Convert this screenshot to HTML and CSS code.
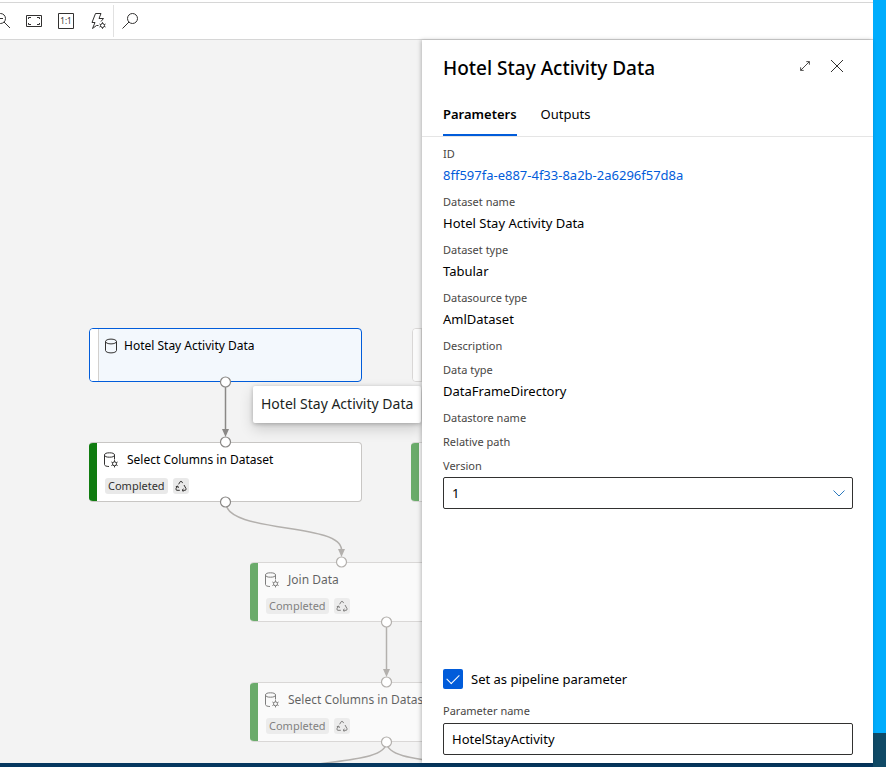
FILE: index.html
```html
<!DOCTYPE html>
<html lang="en">
<head>
<meta charset="utf-8">
<title>Pipeline run</title>
<link rel="stylesheet" href="styles.css">
</head>
<body>
<svg class="sprite" aria-hidden="true">
  <symbol id="dataset" viewBox="0 0 16 16"><ellipse cx="8" cy="3.500" rx="5.500" ry="2.400"/><path d="M2.500 3.500v9C2.500 13.800 5 14.900 8 14.900s5.500-1.100 5.500-2.400v-9"/></symbol>
  <symbol id="module" viewBox="0 0 16 16"><ellipse cx="6.500" cy="3" rx="5" ry="2.200"/><path d="M1.500 3v9.500c0 1.200 1.800 2 4.500 2M11.500 3v4.500"/><circle cx="11.500" cy="11.800" r="2"/><path d="M11.500 8.200v1.600M11.500 13.800v1.600M8.400 10l1.400.8M13.200 12.800l1.400.8M8.400 13.600l1.400-.8M13.200 10.800l1.400-.8"/></symbol>
  <symbol id="recycle" viewBox="0 0 12 12"><path d="M3.600 4.300 5.200 1.700q.8-1.200 1.600 0l.8 1.400M9 5l2 3.600q.5 1.500-1 1.700H7.200M8.500 8.900 7 10.300l1.500 1.400M4.800 10.300H2q-1.500-.2-1-1.700l1.400-2.500M.8 6.700l2-.7.6 2"/></symbol>
</svg>
<div class="desktop">
  <div class="window">
    <header class="toolbar">
      <button class="tool" aria-label="Zoom out"><svg viewBox="0 0 20 20"><circle cx="8.500" cy="7.500" r="5"/><path d="M12 11l6 6M6 7.500h5"/></svg></button>
      <button class="tool" aria-label="Fit to screen"><svg viewBox="0 0 20 20"><path d="M2.500 4.500h15v11h-15z"/><path d="M4.500 8V6.500H7M13 6.500h2.500V8M4.500 12v1.500H7M13 13.500h2.500V12"/></svg></button>
      <button class="tool" aria-label="Actual size"><svg viewBox="0 0 20 20"><path d="M2.500 2.500h15v15h-15z"/><text x="10" y="13">1:1</text></svg></button>
      <button class="tool" aria-label="Auto layout"><svg viewBox="0 0 20 20"><path d="M10.500 14.500H8.500l-4 3 2.500-6H4L7.500 2.500H13L11 7.500h4.500L13 10.500"/><circle cx="14.500" cy="14.500" r="2"/><path d="M14.500 11.200v1.300M14.500 16.500v1.300M11.500 13l1.200.6M16.300 15.400l1.200.6M11.500 16l1.200-.6M16.300 13.600l1.200-.6"/></svg></button>
      <button class="tool search" aria-label="Search"><svg viewBox="0 0 20 20"><circle cx="12.500" cy="7.500" r="5"/><path d="M9 11l-6.500 6.500"/></svg></button>
    </header>
    <main class="workspace">
      <section class="canvas" aria-label="Pipeline graph">
        <article class="node source selected n1"><div class="head"><svg class="icon"><use href="#dataset"/></svg><span>Hotel Stay Activity Data</span></div></article>
        <article class="node source faded n2"></article>
        <article class="node done n3"><div class="head"><svg class="icon"><use href="#module"/></svg><span>Select Columns in Dataset</span></div><div class="status"><span class="badge">Completed</span><span class="badge reuse"><svg><use href="#recycle"/></svg></span></div></article>
        <article class="node done faded n4"></article>
        <article class="node done faded n5"><div class="head"><svg class="icon"><use href="#module"/></svg><span>Join Data</span></div><div class="status"><span class="badge">Completed</span><span class="badge reuse"><svg><use href="#recycle"/></svg></span></div></article>
        <article class="node done faded n6"><div class="head"><svg class="icon"><use href="#module"/></svg><span>Select Columns in Dataset</span></div><div class="status"><span class="badge">Completed</span><span class="badge reuse"><svg><use href="#recycle"/></svg></span></div></article>
        <svg class="wires" aria-hidden="true">
          <g class="strong"><path d="M225.500 342v48"/><path class="tip" d="M222 389h7l-3.500 8z"/></g>
          <path d="M225.500 462C225.500 494 341.500 482 341.500 510"/><path class="tip" d="M338 509h7l-3.500 8z"/>
          <path d="M386.500 582v48"/><path class="tip" d="M383 629h7l-3.500 8z"/>
          <path d="M386.500 702C386.500 722 330 719 270 732M386.500 702C386.500 722 443 719 503 732"/>
          <g class="strong"><circle cx="225.500" cy="342" r="5"/><circle cx="225.500" cy="402" r="5"/><circle cx="225.500" cy="462" r="5"/></g>
          <circle cx="341.500" cy="522" r="5"/><circle cx="386.500" cy="582" r="5"/><circle cx="386.500" cy="642" r="5"/><circle cx="386.500" cy="702" r="5"/>
        </svg>
        <div class="tooltip" role="tooltip">Hotel Stay Activity Data</div>
      </section>
      <aside class="panel">
        <div class="panel-head">
          <h1>Hotel Stay Activity Data</h1>
          <button class="action" aria-label="Expand"><svg viewBox="0 0 16 16"><path d="M3 13 13 3M9.500 3H13v3.500M3 9.500V13h3.500"/></svg></button>
          <button class="action close" aria-label="Close"><svg viewBox="0 0 16 16"><path d="M2 2l12 12M14 2 2 14"/></svg></button>
        </div>
        <nav class="tabs"><a href="#parameters" class="active" aria-current="page">Parameters</a><a href="#outputs">Outputs</a></nav>
        <div class="content" id="parameters">
          <dl>
            <div><dt>ID</dt><dd><a href="#dataset-details">8ff597fa-e887-4f33-8a2b-2a6296f57d8a</a></dd></div>
            <div><dt>Dataset name</dt><dd>Hotel Stay Activity Data</dd></div>
            <div><dt>Dataset type</dt><dd>Tabular</dd></div>
            <div><dt>Datasource type</dt><dd>AmlDataset</dd></div>
            <div><dt>Description</dt></div>
            <div><dt>Data type</dt><dd>DataFrameDirectory</dd></div>
            <div><dt>Datastore name</dt></div>
            <div><dt>Relative path</dt></div>
          </dl>
          <label class="caption" for="version">Version</label>
          <div class="select"><select id="version" class="field"><option>1</option></select><svg viewBox="0 0 14 14"><path d="M1.500 4.500 7 10l5.500-5.500"/></svg></div>
          <div class="pipeline">
            <div class="check"><input type="checkbox" id="pipeline-param" checked><label for="pipeline-param">Set as pipeline parameter</label></div>
            <label class="caption" for="param-name">Parameter name</label>
            <input class="field" id="param-name" type="text" value="HotelStayActivity">
          </div>
        </div>
      </aside>
    </main>
  </div>
</div>
</body>
</html>
```
FILE: styles.css
```css
* { box-sizing: border-box; }
body { margin: 0; font: 13px/20px "Noto Sans", sans-serif; color: #000; }
button { border: 0; padding: 0; background: none; }
svg { fill: none; stroke: #323130; stroke-width: 1; display: block; }
.sprite { position: absolute; width: 0; height: 0; }

.desktop {
  display: flex;
  height: 100vh;
  padding: 0 13px 4px 0;
  background:
    linear-gradient(#06375f, #06375f) left bottom / calc(100% - 13px) 4px no-repeat,
    linear-gradient(#104a66, #104a66) right bottom / 13px 34px no-repeat,
    #00adfd;
}
.window { flex: 1; min-width: 0; display: flex; flex-direction: column; background: #fff; padding-top: 2px; }

.toolbar {
  display: flex;
  align-items: center;
  height: 38px;
  flex: none;
  border: solid #d6d6d6;
  border-width: 1px 0;
  overflow: hidden;
}
.tool { width: 32px; height: 32px; flex: none; display: grid; place-items: center; }
.tool:first-child { margin-left: -14px; }
.tool svg { width: 20px; height: 20px; }
.tool text { font: 8px "Noto Sans", sans-serif; text-anchor: middle; fill: #323130; stroke: none; }
.search { border-left: 1px solid #e1e1e1; margin-left: -1px; }

.workspace { flex: 1; min-height: 0; display: grid; grid-template-columns: minmax(0, 422fr) minmax(0, 451fr); }
.canvas { position: relative; background: #f3f3f3; min-width: 0; overflow: hidden; }

.node {
  position: absolute;
  width: 273px;
  height: 60px;
  border: 1px solid #c8c6c4;
  border-radius: 4px;
  background: #fff;
  padding: 8px 0 0 14px;
  overflow: hidden;
  white-space: nowrap;
}
.node::before { content: ""; position: absolute; left: 0; top: 0; bottom: 0; width: 8px; background: #fff; border-right: 1px solid #d2d0ce; }
.source { height: 54px; padding-left: 13px; }
.selected { border-color: #015cda; background: #f3f8fd; }
.done { border-left: 0; }
.done::before { background: #107c10; border: 0; top: -1px; bottom: -1px; }
.faded { opacity: .6; }
.n1 { left: 89px; top: 288px; }
.n2 { left: 412px; top: 288px; }
.n3 { left: 89px; top: 402px; }
.n4 { left: 411px; top: 402px; }
.n5 { left: 250px; top: 522px; }
.n6 { left: 250px; top: 642px; }
.head { display: flex; align-items: center; gap: 5px; height: 18px; font-size: 12px; }
.done .head { gap: 8px; }
.icon { width: 16px; height: 16px; }
.status { display: flex; gap: 5px; padding-top: 9px; }
.badge { height: 16px; border-radius: 3px; background: #e9e9e9; font-size: 11px; line-height: 16px; padding: 0 3px; margin-left: 2px; color: #323130; }
.reuse { padding: 2px; margin: 0; }
.reuse svg { width: 12px; height: 12px; }

.wires { position: absolute; inset: 0; width: 100%; height: 100%; stroke: #b3b0ad; pointer-events: none; }
.wires path { stroke-width: 1.500; }
.wires .strong { stroke: #8a8886; }
.wires circle { fill: #fff; stroke-width: 1.200; }
.wires .tip { fill: #b3b0ad; stroke: none; }
.wires .strong .tip { fill: #8a8886; }
.tooltip {
  position: absolute;
  left: 253px;
  top: 346px;
  padding: 8px 8px 9px;
  background: #fff;
  border-radius: 2px;
  box-shadow: 0 6px 14px rgba(0, 0, 0, .16), 0 1px 4px rgba(0, 0, 0, .24);
  font-size: 14px;
  color: #201f1e;
  white-space: nowrap;
}

.panel { display: flex; flex-direction: column; min-width: 0; background: #fff; position: relative; box-shadow: -1px 0 4px rgba(0, 0, 0, .25); }
.panel-head { display: flex; align-items: center; padding: 12px 20px 0 21px; height: 44px; }
h1 { flex: 1; margin: 0; font-size: 19px; line-height: 32px; font-weight: 500; white-space: nowrap; }
.action { width: 32px; height: 32px; margin-top: -4px; display: grid; place-items: center; }
.action svg { width: 14px; height: 14px; }
.close svg { width: 16px; height: 16px; }
.tabs { display: flex; align-items: flex-end; gap: 24px; height: 53px; padding: 0 21px; border-bottom: 1px solid #e5e5e5; }
.tabs a { color: #000; text-decoration: none; height: 44px; line-height: 44px; }
.tabs .active { font-weight: 600; border-bottom: 2px solid #015cda; }
.content { flex: 1; display: flex; flex-direction: column; padding: 7px 20px 8px 21px; }
dl { margin: 0; }
dl div { padding-bottom: 4px; }
dt, .caption { display: block; font-size: 11px; line-height: 20px; color: #484644; }
dd { margin: 0; line-height: 22px; padding-bottom: 2px; }
dd a { color: #015cda; text-decoration: none; }
.field {
  display: block;
  width: 100%;
  height: 32px;
  margin: 0;
  padding: 0 8px;
  border: 1px solid #323130;
  border-radius: 2px;
  background: #fff;
  color: #000;
  font: inherit;
  appearance: none;
}
.select { position: relative; margin-top: 1px; }
.select svg { position: absolute; right: 7px; top: 9px; width: 14px; height: 14px; stroke: #2b79bd; pointer-events: none; }
.pipeline { margin-top: auto; }
.check { display: flex; align-items: center; gap: 8px; margin-bottom: 12px; }
.check input { appearance: none; width: 20px; height: 20px; margin: 0; border-radius: 2px; background: #015cda; display: grid; place-items: center; }
.check input:checked::after { content: ""; width: 11px; height: 6px; margin-bottom: 3px; border: solid #fff; border-width: 0 0 1px 1px; transform: rotate(-45deg); }
.pipeline .caption { margin-bottom: 2px; }
```
